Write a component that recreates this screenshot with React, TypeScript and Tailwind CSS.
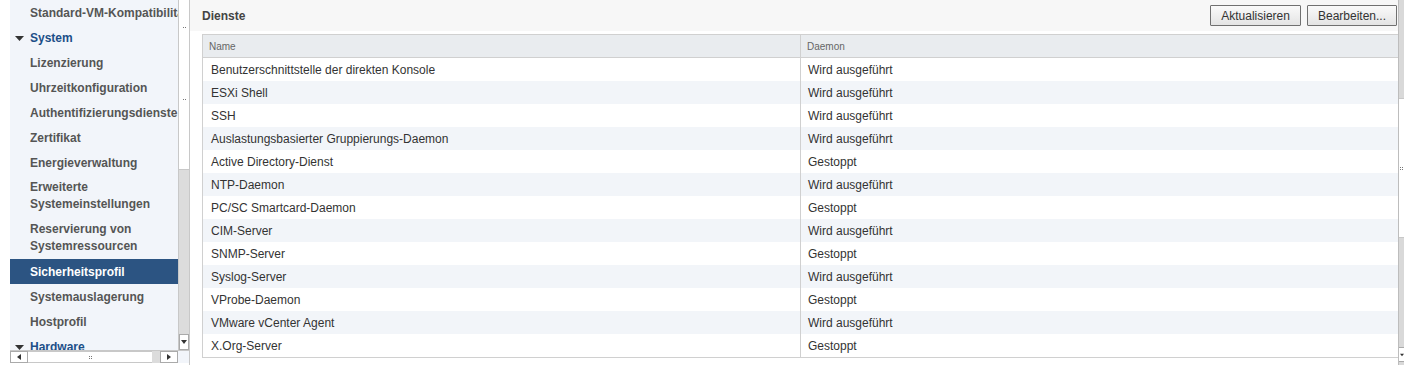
import React from "react";

const rows: [string, string][] = [
  ["Benutzerschnittstelle der direkten Konsole", "Wird ausgeführt"],
  ["ESXi Shell", "Wird ausgeführt"],
  ["SSH", "Wird ausgeführt"],
  ["Auslastungsbasierter Gruppierungs-Daemon", "Wird ausgeführt"],
  ["Active Directory-Dienst", "Gestoppt"],
  ["NTP-Daemon", "Wird ausgeführt"],
  ["PC/SC Smartcard-Daemon", "Gestoppt"],
  ["CIM-Server", "Wird ausgeführt"],
  ["SNMP-Server", "Gestoppt"],
  ["Syslog-Server", "Wird ausgeführt"],
  ["VProbe-Daemon", "Gestoppt"],
  ["VMware vCenter Agent", "Wird ausgeführt"],
  ["X.Org-Server", "Gestoppt"],
];

type Item = { label: string; lines?: string[]; header?: boolean; selected?: boolean };

const items: Item[] = [
  { label: "Standard-VM-Kompatibilität" },
  { label: "System", header: true },
  { label: "Lizenzierung" },
  { label: "Uhrzeitkonfiguration" },
  { label: "Authentifizierungsdienste" },
  { label: "Zertifikat" },
  { label: "Energieverwaltung" },
  { label: "", lines: ["Erweiterte", "Systemeinstellungen"] },
  { label: "", lines: ["Reservierung von", "Systemressourcen"] },
  { label: "Sicherheitsprofil", selected: true },
  { label: "Systemauslagerung" },
  { label: "Hostprofil" },
  { label: "Hardware", header: true },
];

const Grip = () => (
  <div className="grid grid-cols-2 gap-[1px] w-[3px]">
    <div className="w-[1px] h-[1px] bg-[#777]" />
    <div className="w-[1px] h-[1px] bg-[#777]" />
    <div className="w-[1px] h-[1px] bg-[#777]" />
    <div className="w-[1px] h-[1px] bg-[#777]" />
  </div>
);

const Tri = ({ dir, big }: { dir: "down" | "left" | "right"; big?: boolean }) => {
  if (dir === "down" && big) {
    return (
      <svg width={9} height={5} viewBox="0 0 9 5">
        <polygon points="0,0 9,0 4.5,5" fill="#333" />
      </svg>
    );
  }
  const pts = dir === "down" ? "0,0 6,0 3,4" : dir === "left" ? "4,0 4,6 0,3" : "0,0 0,6 4,3";
  const w = dir === "down" ? 6 : 4;
  const h = dir === "down" ? 4 : 6;
  return (
    <svg width={w} height={h} viewBox={`0 0 ${w} ${h}`}>
      <polygon points={pts} fill="#333" />
    </svg>
  );
};

export default function App() {
  return (
    <div
      className="flex w-[1404px] h-[365px] bg-white overflow-hidden text-[12px]"
      style={{ fontFamily: '"Liberation Sans", Arial, sans-serif' }}
    >
      <div className="w-[10px] shrink-0" />
      {/* Sidebar */}
      <div className="w-[179px] shrink-0 flex flex-col h-[365px]">
        <div className="flex h-[350px]">
          <div className="w-[168px] bg-[#f2f5fa] overflow-hidden">
            {items.map((it, i) => {
              if (it.header) {
                return (
                  <div key={i} className="h-[25px] flex items-center pl-[5px] font-bold text-[#1c4f88]">
                    <div className="w-[15px] flex items-center pt-[2px]">
                      <Tri dir="down" big />
                    </div>
                    <span>{it.label}</span>
                  </div>
                );
              }
              if (it.lines) {
                return (
                  <div key={i} className="h-[42px] flex flex-col justify-center pl-[20px] font-bold text-[#555] leading-[17px]">
                    {it.lines.map((l) => (
                      <div key={l} className="whitespace-nowrap">{l}</div>
                    ))}
                  </div>
                );
              }
              return (
                <div
                  key={i}
                  className={
                    "h-[25px] flex items-center pl-[20px] font-bold whitespace-nowrap " +
                    (it.selected ? "bg-[#2c5482] text-white" : "text-[#555]")
                  }
                >
                  {it.label}
                </div>
              );
            })}
          </div>
          {/* vertical scrollbar */}
          <div className="w-[11px] flex flex-col border-l border-[#c8c8c8] bg-[#dcdcdc]">
            <div className="h-[170px] bg-white border-b border-[#c8c8c8] flex justify-center pt-[27px]">
              <Grip />
            </div>
            <div className="flex-1" />
            <div className="h-[16px] bg-white border border-[#aaa] flex items-center justify-center">
              <Tri dir="down" />
            </div>
          </div>
        </div>
        {/* horizontal scrollbar */}
        <div className="h-[13px] flex bg-[#dcdcdc] border-t border-[#c8c8c8]">
          <div className="w-[18px] bg-white border border-[#aaa] flex items-center justify-center">
            <Tri dir="left" />
          </div>
          <div className="w-[124px] bg-white border-y border-[#c8c8c8] flex items-center justify-center">
            <Grip />
          </div>
          <div className="flex-1" />
          <div className="w-[18px] bg-white border border-[#aaa] flex items-center justify-center">
            <Tri dir="right" />
          </div>
          <div className="w-[11px] bg-[#f2f5fa]" />
        </div>
      </div>
      <div className="w-px bg-[#c8c8c8] shrink-0" />
      {/* Main */}
      <div className="flex-1 flex min-w-0">
        <div className="flex-1 flex flex-col min-w-0 bg-white">
          <div className="h-[31px] bg-[#f7f7f7] flex items-center justify-between pl-[12px] pr-[1px]">
            <span className="font-bold text-[#444]">Dienste</span>
            <div className="flex gap-[6px]">
              <button className="h-[21px] px-[10px] border border-[#707070] bg-gradient-to-b from-[#fafafa] to-[#e4e4e4] text-[#333] text-[12px] rounded-[1px]">
                Aktualisieren
              </button>
              <button className="h-[21px] px-[10px] border border-[#707070] bg-gradient-to-b from-[#fafafa] to-[#e4e4e4] text-[#333] text-[12px] rounded-[1px]">
                Bearbeiten...
              </button>
            </div>
          </div>
          <div className="pl-[12px] pt-[3px]">
            <div className="border border-[#d0d0d0] border-r-0">
              <div className="h-[23px] flex bg-[#e9ecef] border-b border-[#d0d0d0] text-[10px] text-[#666]">
                <div className="w-[598px] flex items-center pl-[6px] border-r border-[#d0d0d0]">Name</div>
                <div className="flex-1 flex items-center pl-[6px]">Daemon</div>
              </div>
              {rows.map(([n, d], i) => (
                <div key={n} className={"h-[23px] flex text-[#333] " + (i % 2 === 1 ? "bg-[#f2f5f9]" : "bg-white")}>
                  <div className="w-[598px] flex items-center pl-[8px] border-r border-[#d0d0d0]">{n}</div>
                  <div className="flex-1 flex items-center pl-[7px]">{d}</div>
                </div>
              ))}
            </div>
          </div>
        </div>
        {/* right scrollbar */}
        <div className="w-[6px] shrink-0 flex flex-col bg-[#d9d9d9] border-l border-[#bdbdbd]">
          <div className="h-[98px]" />
          <div className="h-[140px] bg-white border-y border-[#c8c8c8] flex items-center pl-[1px]">
            <Grip />
          </div>
          <div className="flex-1" />
          <div className="h-[15px] bg-white border-y border-[#aaa] flex items-center pl-[1px] mb-[3px]">
            <Tri dir="down" />
          </div>
        </div>
      </div>
    </div>
  );
}
